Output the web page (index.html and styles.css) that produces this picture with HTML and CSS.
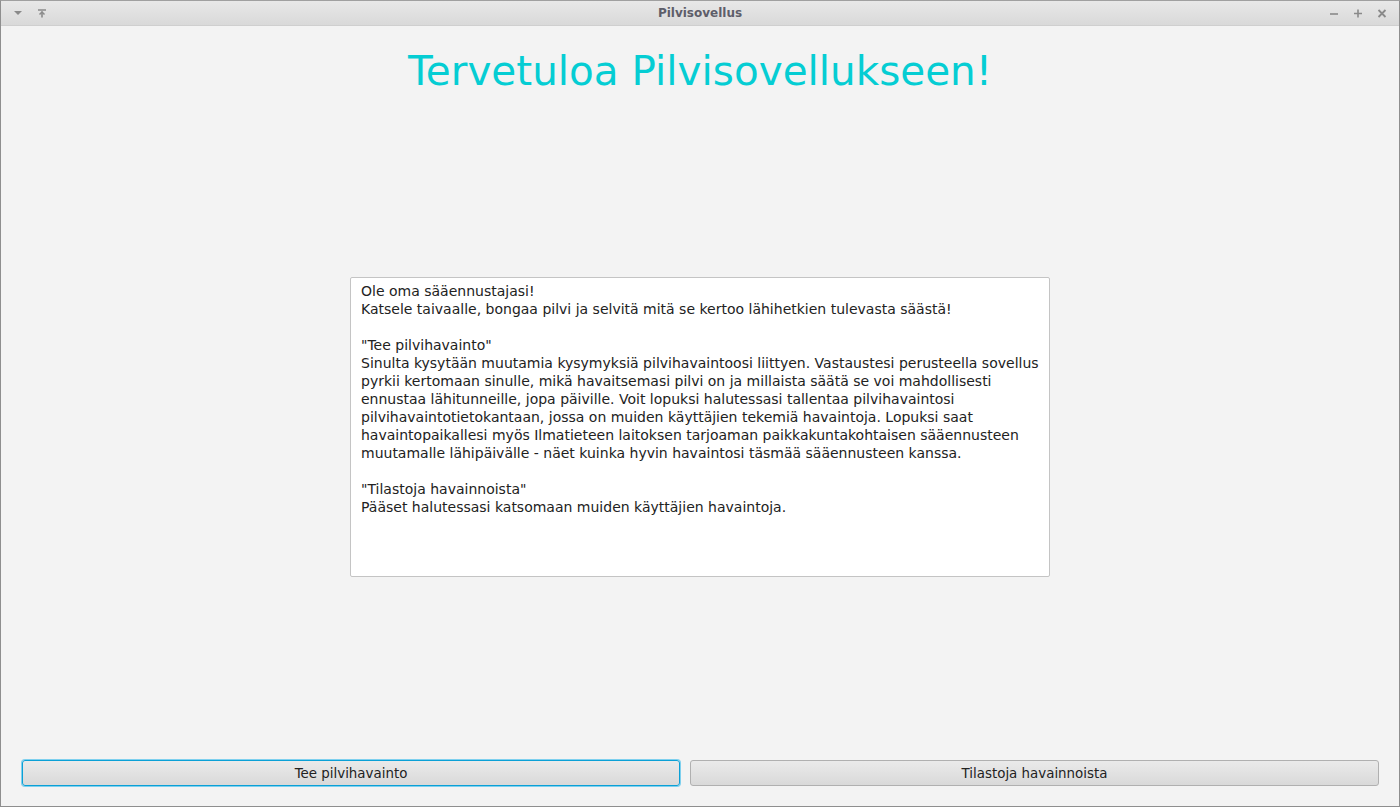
FILE: index.html
```html
<!DOCTYPE html>
<html lang="fi">
<head>
<meta charset="utf-8">
<title>Pilvisovellus</title>
<link rel="stylesheet" href="styles.css">
</head>
<body>
<div class="window">
  <div class="titlebar">
    <div class="tb-left">
      <svg class="tb-icon" width="12" height="12" viewBox="0 0 12 12"><path d="M2 4 L10 4 L6 8 Z" fill="#8a8a8a"/></svg>
      <svg class="tb-icon" width="12" height="12" viewBox="0 0 12 12"><path d="M2 3 H10" stroke="#8a8a8a" stroke-width="1.5"/><path d="M6 4.5 V10.5" stroke="#8a8a8a" stroke-width="1.6"/><path d="M3.5 7.5 L6 5 L8.5 7.5" fill="none" stroke="#8a8a8a" stroke-width="1.5"/></svg>
    </div>
    <div class="tb-title">Pilvisovellus</div>
    <div class="tb-right">
      <svg class="tb-icon" width="12" height="12" viewBox="0 0 12 12"><path d="M2 7 H10" stroke="#8a8a8a" stroke-width="1.6"/></svg>
      <svg class="tb-icon" width="12" height="12" viewBox="0 0 12 12"><path d="M2 6.5 H10 M6 2.5 V10.5" stroke="#8a8a8a" stroke-width="1.6"/></svg>
      <svg class="tb-icon" width="12" height="12" viewBox="0 0 12 12"><path d="M2.5 3 L9.5 10 M9.5 3 L2.5 10" stroke="#8a8a8a" stroke-width="1.8"/></svg>
    </div>
  </div>
  <div class="content">
    <h1 class="heading">Tervetuloa Pilvisovellukseen!</h1>
    <div class="infobox">Ole oma sääennustajasi!
Katsele taivaalle, bongaa pilvi ja selvitä mitä se kertoo lähihetkien tulevasta säästä!

"Tee pilvihavainto"
Sinulta kysytään muutamia kysymyksiä pilvihavaintoosi liittyen. Vastaustesi perusteella sovellus pyrkii kertomaan sinulle, mikä havaitsemasi pilvi on ja millaista säätä se voi mahdollisesti ennustaa lähitunneille, jopa päiville. Voit lopuksi halutessasi tallentaa pilvihavaintosi pilvihavaintotietokantaan, jossa on muiden käyttäjien tekemiä havaintoja. Lopuksi saat havaintopaikallesi myös Ilmatieteen laitoksen tarjoaman paikkakuntakohtaisen sääennusteen muutamalle lähipäivälle - näet kuinka hyvin havaintosi täsmää sääennusteen kanssa.

"Tilastoja havainnoista"
Pääset halutessasi katsomaan muiden käyttäjien havaintoja.</div>
    <div class="spacer"></div>
    <div class="buttons">
      <button class="btn btn-left btn-focused">Tee pilvihavainto</button>
      <button class="btn btn-right">Tilastoja havainnoista</button>
    </div>
  </div>
</div>
</body>
</html>
```
FILE: styles.css
```css
html, body {
  margin: 0;
  padding: 0;
}
body {
  font-family: "DejaVu Sans", sans-serif;
  background: #f3f3f3;
}
.window {
  box-sizing: border-box;
  width: 1400px;
  height: 807px;
  border: 1px solid #8e8e8e;
  border-top-color: #a0a0a0;
  display: flex;
  flex-direction: column;
  background: #f3f3f3;
}
.titlebar {
  height: 24px;
  flex: none;
  background: linear-gradient(#e8e8e8, #d9d9d9);
  border-bottom: 1px solid #cfcfcf;
  display: flex;
  align-items: center;
}
.tb-left {
  display: flex;
  gap: 12px;
  padding-left: 11px;
  width: 200px;
}
.tb-title {
  flex: 1;
  text-align: center;
  font-size: 12px;
  font-weight: bold;
  color: #5e5e6a;
}
.tb-right {
  display: flex;
  gap: 12px;
  width: 200px;
  justify-content: flex-end;
  padding-right: 11px;
}
.tb-icon {
  display: block;
}
.content {
  flex: 1;
  display: flex;
  flex-direction: column;
  align-items: center;
  padding: 0 20px 20px 20px;
}
.heading {
  margin: 21px 0 0 0;
  font-weight: normal;
  font-size: 40.5px;
  line-height: 48px;
  color: #05cdd3;
}
.infobox {
  margin-top: 182px;
  box-sizing: border-box;
  width: 700px;
  height: 300px;
  background: #ffffff;
  border: 1px solid #c4c4c4;
  border-radius: 2px;
  padding: 4px 10px;
  font-size: 14px;
  line-height: 18px;
  color: #222222;
  white-space: pre-wrap;
}
.spacer {
  flex: 1;
}
.buttons {
  align-self: stretch;
  display: flex;
  gap: 10px;
  padding-left: 1px;
}
.btn {
  height: 26px;
  font-family: "DejaVu Sans", sans-serif;
  font-size: 13.4px;
  color: #222222;
  background: linear-gradient(#eaeaea, #d9d9d9);
  border: 1px solid #b0b0b0;
  border-radius: 3px;
  padding: 0;
}
.btn-left {
  width: 658px;
  flex: none;
}
.btn-right {
  flex: 1;
}
.btn-focused {
  border-color: #0ba0d6;
  box-shadow: 0 0 0 1px #7fd0ee;
}
```
